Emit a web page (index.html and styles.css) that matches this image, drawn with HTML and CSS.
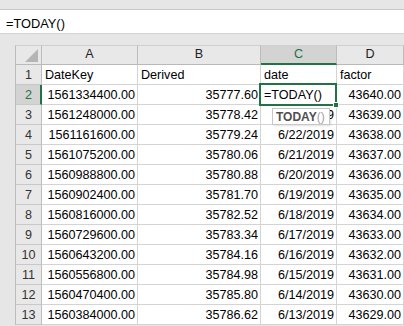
FILE: index.html
```html
<!DOCTYPE html>
<html>
<head>
<meta charset="utf-8">
<link rel="stylesheet" href="styles.css">
</head>
<body>
<div class="app">
  <div class="topband"></div>
  <div class="fbar"><span class="ftext">=TODAY()</span></div>
  <div class="sheet">
    <div class="hd corner"><svg class="tri" width="13" height="13" viewBox="0 0 13 13"><polygon points="13,0 13,13 0,13" fill="#b5b5b5"/></svg></div>
    <div class="hd col">A</div>
    <div class="hd col">B</div>
    <div class="hd col sel">C</div>
    <div class="hd col">D</div>

    <div class="rh">1</div><div class="c l">DateKey</div><div class="c l">Derived</div><div class="c l">date</div><div class="c l">factor</div>

    <div class="rh rsel">2</div><div class="c">1561334400.00</div><div class="c">35777.60</div><div class="c l active">=TODAY()<span class="handle"></span><div class="tip"><b>TODAY</b><span class="par">()</span></div></div><div class="c">43640.00</div>
    <div class="rh">3</div><div class="c">1561248000.00</div><div class="c">35778.42</div><div class="c">6/23/2019</div><div class="c">43639.00</div>
    <div class="rh">4</div><div class="c">1561161600.00</div><div class="c">35779.24</div><div class="c">6/22/2019</div><div class="c">43638.00</div>
    <div class="rh">5</div><div class="c">1561075200.00</div><div class="c">35780.06</div><div class="c">6/21/2019</div><div class="c">43637.00</div>
    <div class="rh">6</div><div class="c">1560988800.00</div><div class="c">35780.88</div><div class="c">6/20/2019</div><div class="c">43636.00</div>
    <div class="rh">7</div><div class="c">1560902400.00</div><div class="c">35781.70</div><div class="c">6/19/2019</div><div class="c">43635.00</div>
    <div class="rh">8</div><div class="c">1560816000.00</div><div class="c">35782.52</div><div class="c">6/18/2019</div><div class="c">43634.00</div>
    <div class="rh">9</div><div class="c">1560729600.00</div><div class="c">35783.34</div><div class="c">6/17/2019</div><div class="c">43633.00</div>
    <div class="rh">10</div><div class="c">1560643200.00</div><div class="c">35784.16</div><div class="c">6/16/2019</div><div class="c">43632.00</div>
    <div class="rh">11</div><div class="c">1560556800.00</div><div class="c">35784.98</div><div class="c">6/15/2019</div><div class="c">43631.00</div>
    <div class="rh">12</div><div class="c">1560470400.00</div><div class="c">35785.80</div><div class="c">6/14/2019</div><div class="c">43630.00</div>
    <div class="rh">13</div><div class="c">1560384000.00</div><div class="c">35786.62</div><div class="c">6/13/2019</div><div class="c">43629.00</div>
  </div>
</div>
</body>
</html>
```
FILE: styles.css
```css
* { box-sizing: border-box; }
html, body { margin: 0; padding: 0; }
body {
  background: #e6e6e6;
  font-family: "Liberation Sans", Arial, sans-serif;
  font-size: 12.6px;
  color: #000;
  overflow: hidden;
}
.app { width: 404px; height: 326px; overflow: hidden; }
.topband { height: 9px; }
.fbar {
  height: 25px;
  background: #fff;
  border-top: 1px solid #c6c6c6;
  border-bottom: 1px solid #d4d4d4;
  padding: 4px 0 0 6px;
  display: flex;
  align-items: center;
  font-size: 12.8px;
}
.sheet {
  margin-top: 11px;
  margin-left: 15px;
  display: grid;
  grid-template-columns: 27px 96px 123px 76px 67px;
  grid-template-rows: 20px repeat(13, 20px);
}
.hd {
  background: #e8e8e8;
  border-top: 1px solid #d0d0d0;
  border-bottom: 1px solid #b9b9b9;
  border-right: 1px solid #bdbdbd;
  display: flex;
  align-items: flex-end;
  justify-content: center;
  padding-bottom: 3px;
  color: #222;
  line-height: 1;
}
.corner {
  border-left: 1px solid #bdbdbd;
  position: relative;
}
.tri { position: absolute; right: 3px; bottom: 2px; }
.hd.sel {
  background: #d3d3d3;
  border-bottom: 2px solid #217346;
  color: #217346;
  padding-bottom: 2px;
}
.rh {
  background: #e8e8e8;
  border-left: 1px solid #bdbdbd;
  border-right: 1px solid #bdbdbd;
  border-bottom: 1px solid #c8c8c8;
  display: flex;
  align-items: flex-end;
  justify-content: center;
  padding-bottom: 2px;
  color: #333;
  line-height: 1;
}
.rh.rsel {
  background: #d3d3d3;
  border-right: 2px solid #217346;
  color: #217346;
  padding-left: 1px;
}
.c {
  background: #fff;
  border-right: 1px solid #d4d4d4;
  border-bottom: 1px solid #d4d4d4;
  display: flex;
  align-items: flex-end;
  justify-content: flex-end;
  padding: 0 2px 2px 3px;
  line-height: 1;
  white-space: nowrap;
}
.c.l { justify-content: flex-start; }
.active { position: relative; z-index: 2; }
.active::after {
  content: "";
  position: absolute;
  left: -2px; top: -2px; right: -1px; bottom: -2px;
  border: 2px solid #217346;
  pointer-events: none;
}
.handle {
  position: absolute;
  right: -3px;
  bottom: -4px;
  width: 6px;
  height: 6px;
  background: #217346;
  border: 1px solid #fff;
  z-index: 3;
}
.tip {
  position: absolute;
  left: 11px;
  top: 23px;
  width: 58px;
  height: 17px;
  background: #fff;
  border: 1px solid #c6c6c6;
  box-shadow: 1px 1px 2px rgba(0,0,0,0.12);
  font-size: 12px;
  display: flex;
  align-items: center;
  padding-left: 3px;
  color: #4f4f4f;
}
.tip b { font-weight: bold; }
.tip .par { color: #a0a0a0; font-weight: normal; }
```
